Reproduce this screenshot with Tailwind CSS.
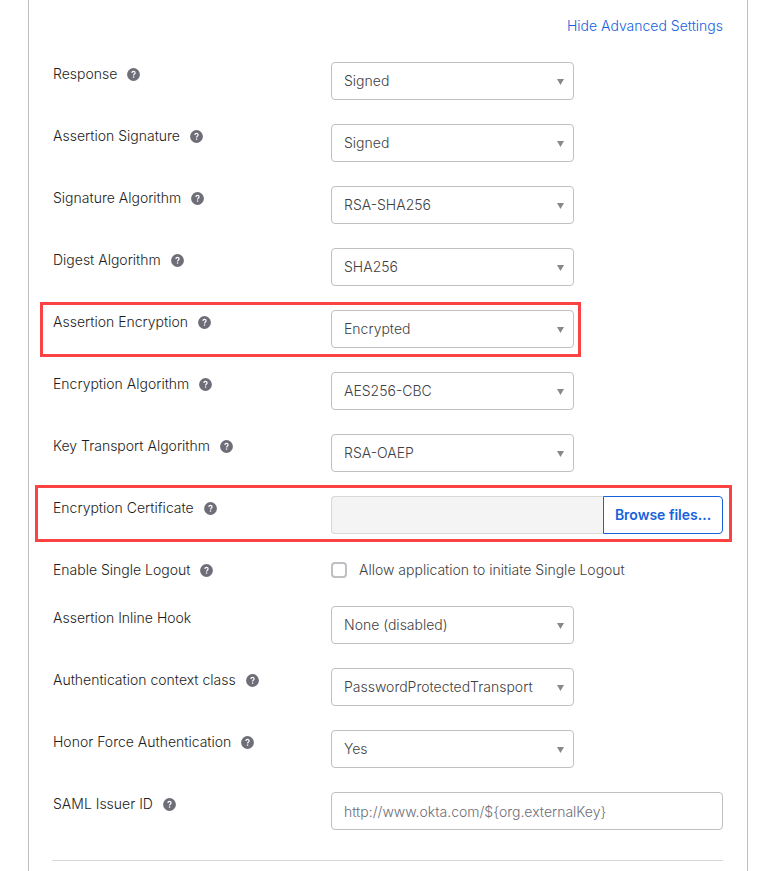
<!DOCTYPE html>
<html lang="en">
<head>
<meta charset="utf-8">
<meta name="viewport" content="width=device-width, initial-scale=1">
<title>SAML Settings</title>
<script src="https://cdn.jsdelivr.net/npm/@tailwindcss/browser@4"></script>
</head>
<body class="bg-white font-['Inter','Liberation_Sans',sans-serif] text-sm font-light text-[#1d1d21]">
<svg class="hidden" aria-hidden="true">
  <symbol id="help" viewBox="0 0 13 13">
    <circle cx="6.5" cy="6.5" r="6.4" fill="#6e6e78"/>
    <path d="M4.9 5.1C4.9 3.9 5.6 3.4 6.5 3.4S8.1 4 8.1 4.9C8.1 6 6.6 6.1 6.6 7.4" fill="none" stroke="#fff" stroke-width="1.2"/>
    <rect x="5.9" y="8.4" width="1.3" height="1.3" fill="#fff"/>
  </symbol>
  <symbol id="arrow" viewBox="0 0 7 6"><path d="M0 0h7L3.5 6z" fill="#888"/></symbol>
</svg>
<main class="ml-7 mr-6 min-h-screen border-x border-[#bebec0] pt-3.5 pr-6 pl-[23px]">
  <div class="flex justify-end"><a href="#" class="leading-6 text-[#1662dd]">Hide Advanced Settings</a></div>
  <form class="mt-6 flex flex-col gap-6">
    <div class="grid grid-cols-[279px_1fr]">
      <div class="flex h-6 items-center gap-2.5 pl-px"><label for="response">Response</label><button type="button" aria-label="Help: Response"><svg class="size-[13px]"><use href="#help"/></svg></button></div>
      <div class="relative w-[243px]"><select id="response" class="h-[38px] w-full appearance-none rounded border border-[#bfbfc4] bg-white px-3 text-[#3f3f44]"><option>Signed</option></select><svg class="pointer-events-none absolute top-[17px] right-2.5 h-1.5 w-[7px]"><use href="#arrow"/></svg></div>
    </div>
    <div class="grid grid-cols-[279px_1fr]">
      <div class="flex h-6 items-center gap-2.5 pl-px"><label for="signature">Assertion Signature</label><button type="button" aria-label="Help: Assertion Signature"><svg class="size-[13px]"><use href="#help"/></svg></button></div>
      <div class="relative w-[243px]"><select id="signature" class="h-[38px] w-full appearance-none rounded border border-[#bfbfc4] bg-white px-3 text-[#3f3f44]"><option>Signed</option></select><svg class="pointer-events-none absolute top-[17px] right-2.5 h-1.5 w-[7px]"><use href="#arrow"/></svg></div>
    </div>
    <div class="grid grid-cols-[279px_1fr]">
      <div class="flex h-6 items-center gap-2.5 pl-px"><label for="sigalg">Signature Algorithm</label><button type="button" aria-label="Help: Signature Algorithm"><svg class="size-[13px]"><use href="#help"/></svg></button></div>
      <div class="relative w-[243px]"><select id="sigalg" class="h-[38px] w-full appearance-none rounded border border-[#bfbfc4] bg-white px-3 text-[#3f3f44]"><option>RSA-SHA256</option></select><svg class="pointer-events-none absolute top-[17px] right-2.5 h-1.5 w-[7px]"><use href="#arrow"/></svg></div>
    </div>
    <div class="grid grid-cols-[279px_1fr]">
      <div class="flex h-6 items-center gap-2.5 pl-px"><label for="digest">Digest Algorithm</label><button type="button" aria-label="Help: Digest Algorithm"><svg class="size-[13px]"><use href="#help"/></svg></button></div>
      <div class="relative w-[243px]"><select id="digest" class="h-[38px] w-full appearance-none rounded border border-[#bfbfc4] bg-white px-3 text-[#3f3f44]"><option>SHA256</option></select><svg class="pointer-events-none absolute top-[17px] right-2.5 h-1.5 w-[7px]"><use href="#arrow"/></svg></div>
    </div>
    <div class="relative grid w-[522px] grid-cols-[279px_1fr]">
      <div class="pointer-events-none absolute -top-2 -right-[7px] -bottom-[9px] -left-3 border-3 border-[#fb4343]"></div>
      <div class="flex h-6 items-center gap-2.5 pl-px"><label for="encryption">Assertion Encryption</label><button type="button" aria-label="Help: Assertion Encryption"><svg class="size-[13px]"><use href="#help"/></svg></button></div>
      <div class="relative w-[243px]"><select id="encryption" class="h-[38px] w-full appearance-none rounded border border-[#bfbfc4] bg-white px-3 text-[#3f3f44]"><option>Encrypted</option></select><svg class="pointer-events-none absolute top-[17px] right-2.5 h-1.5 w-[7px]"><use href="#arrow"/></svg></div>
    </div>
    <div class="grid grid-cols-[279px_1fr]">
      <div class="flex h-6 items-center gap-2.5 pl-px"><label for="encalg">Encryption Algorithm</label><button type="button" aria-label="Help: Encryption Algorithm"><svg class="size-[13px]"><use href="#help"/></svg></button></div>
      <div class="relative w-[243px]"><select id="encalg" class="h-[38px] w-full appearance-none rounded border border-[#bfbfc4] bg-white px-3 text-[#3f3f44]"><option>AES256-CBC</option></select><svg class="pointer-events-none absolute top-[17px] right-2.5 h-1.5 w-[7px]"><use href="#arrow"/></svg></div>
    </div>
    <div class="grid grid-cols-[279px_1fr]">
      <div class="flex h-6 items-center gap-2.5 pl-px"><label for="transport">Key Transport Algorithm</label><button type="button" aria-label="Help: Key Transport Algorithm"><svg class="size-[13px]"><use href="#help"/></svg></button></div>
      <div class="relative w-[243px]"><select id="transport" class="h-[38px] w-full appearance-none rounded border border-[#bfbfc4] bg-white px-3 text-[#3f3f44]"><option>RSA-OAEP</option></select><svg class="pointer-events-none absolute top-[17px] right-2.5 h-1.5 w-[7px]"><use href="#arrow"/></svg></div>
    </div>
    <div class="relative grid grid-cols-[279px_1fr]">
      <div class="pointer-events-none absolute -top-[11px] -right-[9px] -bottom-2 -left-[17px] border-3 border-[#fb4343]"></div>
      <div class="flex h-6 items-center gap-2.5 pl-px"><label for="certificate">Encryption Certificate</label><button type="button" aria-label="Help: Encryption Certificate"><svg class="size-[13px]"><use href="#help"/></svg></button></div>
      <div class="flex h-[38px]"><input id="certificate" type="text" disabled class="min-w-0 flex-1 rounded-l border border-r-0 border-[#d7d7dc] bg-[#f4f4f4] px-3"><button type="button" class="w-[120px] rounded-r border border-[#1662dd] bg-white font-semibold text-[#1662dd]">Browse files...</button></div>
    </div>
    <div class="grid grid-cols-[279px_1fr]">
      <div class="flex h-6 items-center gap-2.5 pl-px"><label for="logout">Enable Single Logout</label><button type="button" aria-label="Help: Enable Single Logout"><svg class="size-[13px]"><use href="#help"/></svg></button></div>
      <label class="flex h-6 items-center gap-3 text-[#3f3f44]"><input id="logout" type="checkbox" class="size-4 appearance-none rounded border-2 border-[#bfbfc4] bg-white checked:bg-[#1662dd]">Allow application to initiate Single Logout</label>
    </div>
    <div class="grid grid-cols-[279px_1fr]">
      <div class="flex h-6 items-center pl-px"><label for="hook">Assertion Inline Hook</label></div>
      <div class="relative w-[243px]"><select id="hook" class="h-[38px] w-full appearance-none rounded border border-[#bfbfc4] bg-white px-3 text-[#3f3f44]"><option>None (disabled)</option></select><svg class="pointer-events-none absolute top-[17px] right-2.5 h-1.5 w-[7px]"><use href="#arrow"/></svg></div>
    </div>
    <div class="grid grid-cols-[279px_1fr]">
      <div class="flex h-6 items-center gap-2.5 pl-px"><label for="context">Authentication context class</label><button type="button" aria-label="Help: Authentication context class"><svg class="size-[13px]"><use href="#help"/></svg></button></div>
      <div class="relative w-[243px]"><select id="context" class="h-[38px] w-full appearance-none rounded border border-[#bfbfc4] bg-white px-3 text-[#3f3f44]"><option>PasswordProtectedTransport</option></select><svg class="pointer-events-none absolute top-[17px] right-2.5 h-1.5 w-[7px]"><use href="#arrow"/></svg></div>
    </div>
    <div class="grid grid-cols-[279px_1fr]">
      <div class="flex h-6 items-center gap-2.5 pl-px"><label for="force">Honor Force Authentication</label><button type="button" aria-label="Help: Honor Force Authentication"><svg class="size-[13px]"><use href="#help"/></svg></button></div>
      <div class="relative w-[243px]"><select id="force" class="h-[38px] w-full appearance-none rounded border border-[#bfbfc4] bg-white px-3 text-[#3f3f44]"><option>Yes</option></select><svg class="pointer-events-none absolute top-[17px] right-2.5 h-1.5 w-[7px]"><use href="#arrow"/></svg></div>
    </div>
    <div class="grid grid-cols-[279px_1fr]">
      <div class="flex h-6 items-center gap-2.5 pl-px"><label for="issuer">SAML Issuer ID</label><button type="button" aria-label="Help: SAML Issuer ID"><svg class="size-[13px]"><use href="#help"/></svg></button></div>
      <input id="issuer" type="text" placeholder="http://www.okta.com/${org.externalKey}" class="h-[38px] w-full rounded border border-[#bfbfc4] bg-white px-3 placeholder:text-[#6e6e78]">
    </div>
  </form>
  <hr class="mt-[30px] border-[#d7d7dc]">
</main>
</body>
</html>
